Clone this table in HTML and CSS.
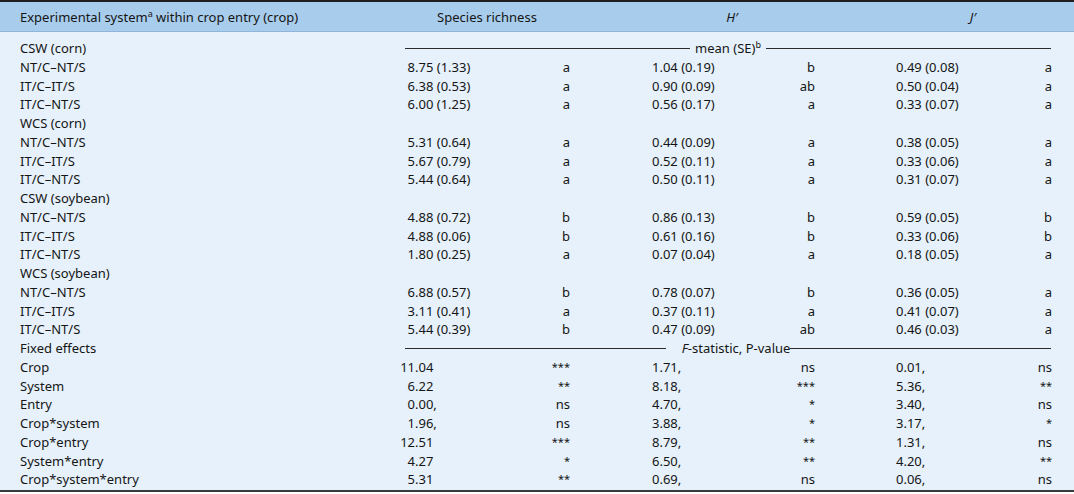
FILE: index.html
```html
<!DOCTYPE html>
<html lang="en">
<head>
<meta charset="utf-8">
<title>Weed community diversity</title>
<link rel="stylesheet" href="styles.css">
</head>
<body>
<div class="table">
  <div class="head row">
    <div class="c1">Experimental system<sup>a</sup> within crop entry (crop)</div>
    <div class="h-sr">Species richness</div>
    <div class="h-h"><i>H′</i></div>
    <div class="h-j"><i>J′</i></div>
  </div>
  <div class="body">
    <div class="row"><div class="c1">CSW (corn)</div><div class="dash gap"><span>mean (SE)<sup>b</sup></span></div></div>
    <div class="row"><div class="c1">NT/C–NT/S</div><div class="v1"><span class="i">8</span>.75 (1.33)</div><div class="l1">a</div><div class="v2">1.04 (0.19)</div><div class="l2">b</div><div class="v3">0.49 (0.08)</div><div class="l3">a</div></div>
    <div class="row"><div class="c1">IT/C–IT/S</div><div class="v1"><span class="i">6</span>.38 (0.53)</div><div class="l1">a</div><div class="v2">0.90 (0.09)</div><div class="l2">ab</div><div class="v3">0.50 (0.04)</div><div class="l3">a</div></div>
    <div class="row"><div class="c1">IT/C–NT/S</div><div class="v1"><span class="i">6</span>.00 (1.25)</div><div class="l1">a</div><div class="v2">0.56 (0.17)</div><div class="l2">a</div><div class="v3">0.33 (0.07)</div><div class="l3">a</div></div>
    <div class="row"><div class="c1">WCS (corn)</div></div>
    <div class="row"><div class="c1">NT/C–NT/S</div><div class="v1"><span class="i">5</span>.31 (0.64)</div><div class="l1">a</div><div class="v2">0.44 (0.09)</div><div class="l2">a</div><div class="v3">0.38 (0.05)</div><div class="l3">a</div></div>
    <div class="row"><div class="c1">IT/C–IT/S</div><div class="v1"><span class="i">5</span>.67 (0.79)</div><div class="l1">a</div><div class="v2">0.52 (0.11)</div><div class="l2">a</div><div class="v3">0.33 (0.06)</div><div class="l3">a</div></div>
    <div class="row"><div class="c1">IT/C–NT/S</div><div class="v1"><span class="i">5</span>.44 (0.64)</div><div class="l1">a</div><div class="v2">0.50 (0.11)</div><div class="l2">a</div><div class="v3">0.31 (0.07)</div><div class="l3">a</div></div>
    <div class="row"><div class="c1">CSW (soybean)</div></div>
    <div class="row"><div class="c1">NT/C–NT/S</div><div class="v1"><span class="i">4</span>.88 (0.72)</div><div class="l1">b</div><div class="v2">0.86 (0.13)</div><div class="l2">b</div><div class="v3">0.59 (0.05)</div><div class="l3">b</div></div>
    <div class="row"><div class="c1">IT/C–IT/S</div><div class="v1"><span class="i">4</span>.88 (0.06)</div><div class="l1">b</div><div class="v2">0.61 (0.16)</div><div class="l2">b</div><div class="v3">0.33 (0.06)</div><div class="l3">b</div></div>
    <div class="row"><div class="c1">IT/C–NT/S</div><div class="v1"><span class="i">1</span>.80 (0.25)</div><div class="l1">a</div><div class="v2">0.07 (0.04)</div><div class="l2">a</div><div class="v3">0.18 (0.05)</div><div class="l3">a</div></div>
    <div class="row"><div class="c1">WCS (soybean)</div></div>
    <div class="row"><div class="c1">NT/C–NT/S</div><div class="v1"><span class="i">6</span>.88 (0.57)</div><div class="l1">b</div><div class="v2">0.78 (0.07)</div><div class="l2">b</div><div class="v3">0.36 (0.05)</div><div class="l3">a</div></div>
    <div class="row"><div class="c1">IT/C–IT/S</div><div class="v1"><span class="i">3</span>.11 (0.41)</div><div class="l1">a</div><div class="v2">0.37 (0.11)</div><div class="l2">a</div><div class="v3">0.41 (0.07)</div><div class="l3">a</div></div>
    <div class="row"><div class="c1">IT/C–NT/S</div><div class="v1"><span class="i">5</span>.44 (0.39)</div><div class="l1">b</div><div class="v2">0.47 (0.09)</div><div class="l2">ab</div><div class="v3">0.46 (0.03)</div><div class="l3">a</div></div>
    <div class="row"><div class="c1">Fixed effects</div><div class="dash fs"><span><i>F</i>-statistic, P-value</span></div></div>
    <div class="row"><div class="c1">Crop</div><div class="v1"><span class="i">11</span>.04</div><div class="l1 st">***</div><div class="v2">1.71,</div><div class="l2">ns</div><div class="v3">0.01,</div><div class="l3">ns</div></div>
    <div class="row"><div class="c1">System</div><div class="v1"><span class="i">6</span>.22</div><div class="l1 st">**</div><div class="v2">8.18,</div><div class="l2 st">***</div><div class="v3">5.36,</div><div class="l3 st">**</div></div>
    <div class="row"><div class="c1">Entry</div><div class="v1"><span class="i">0</span>.00,</div><div class="l1">ns</div><div class="v2">4.70,</div><div class="l2 st">*</div><div class="v3">3.40,</div><div class="l3">ns</div></div>
    <div class="row"><div class="c1">Crop*system</div><div class="v1"><span class="i">1</span>.96,</div><div class="l1">ns</div><div class="v2">3.88,</div><div class="l2 st">*</div><div class="v3">3.17,</div><div class="l3 st">*</div></div>
    <div class="row"><div class="c1">Crop*entry</div><div class="v1"><span class="i">12</span>.51</div><div class="l1 st">***</div><div class="v2">8.79,</div><div class="l2 st">**</div><div class="v3">1.31,</div><div class="l3">ns</div></div>
    <div class="row"><div class="c1">System*entry</div><div class="v1"><span class="i">4</span>.27</div><div class="l1 st">*</div><div class="v2">6.50,</div><div class="l2 st">**</div><div class="v3">4.20,</div><div class="l3 st">**</div></div>
    <div class="row"><div class="c1">Crop*system*entry</div><div class="v1"><span class="i">5</span>.31</div><div class="l1 st">**</div><div class="v2">0.69,</div><div class="l2">ns</div><div class="v3">0.06,</div><div class="l3">ns</div></div>
  </div>
</div>
</body>
</html>
```

FILE: styles.css
```css
* { box-sizing: border-box; }
html, body { margin: 0; padding: 0; background: #ffffff; }
body {
  font-family: "Noto Sans", "Open Sans", sans-serif;
  font-size: 13px;
  color: #151515;
  width: 1074px;
  height: 494px;
}
.table {
  width: 1074px;
  border-top: 2px solid #1f1f1f;
  border-bottom: 2px solid #3a3a3a;
}
.row {
  display: grid;
  grid-template-columns: 400px 90px 90px 160px 84px 136px 114px;
  height: 18.75px;
  line-height: 18.75px;
  white-space: nowrap;
}
.head {
  height: 30px;
  line-height: 30px;
  background: #a8cdec;
  border-bottom: 1px solid #8fb5d8;
}
.body {
  background: #e6f1fb;
  padding: 7px 0 1px;
}
.c1 { grid-column: 1; padding-left: 20px; }
.h-sr { grid-column: 2 / 4; text-align: center; padding-right: 6px; }
.h-h { grid-column: 4 / 6; text-align: center; padding-left: 60px; }
.h-j { grid-column: 6 / 8; text-align: center; padding-left: 48px; }
sup { font-size: 9px; line-height: 0; vertical-align: 5px; }
.v1 { grid-column: 2; }
.l1 { grid-column: 3; text-align: right; padding-right: 10px; }
.v2 { grid-column: 4; padding-left: 72px; }
.l2 { grid-column: 5; text-align: right; padding-right: 9px; }
.v3 { grid-column: 6; padding-left: 72px; }
.l3 { grid-column: 7; text-align: right; padding-right: 22px; }
.i { display: inline-block; width: 15px; text-align: right; }
.st { font-size: 11px; }
.dash {
  grid-column: 2 / 8;
  padding: 0 23px 0 5px;
  display: flex;
  align-items: center;
}
.dash::before, .dash::after {
  content: "";
  flex: 1;
  border-top: 1px solid #2b2b2b;
}
.dash.gap span { padding: 0 5px; }
.dash.fs span { margin-left: 16px; }
```
